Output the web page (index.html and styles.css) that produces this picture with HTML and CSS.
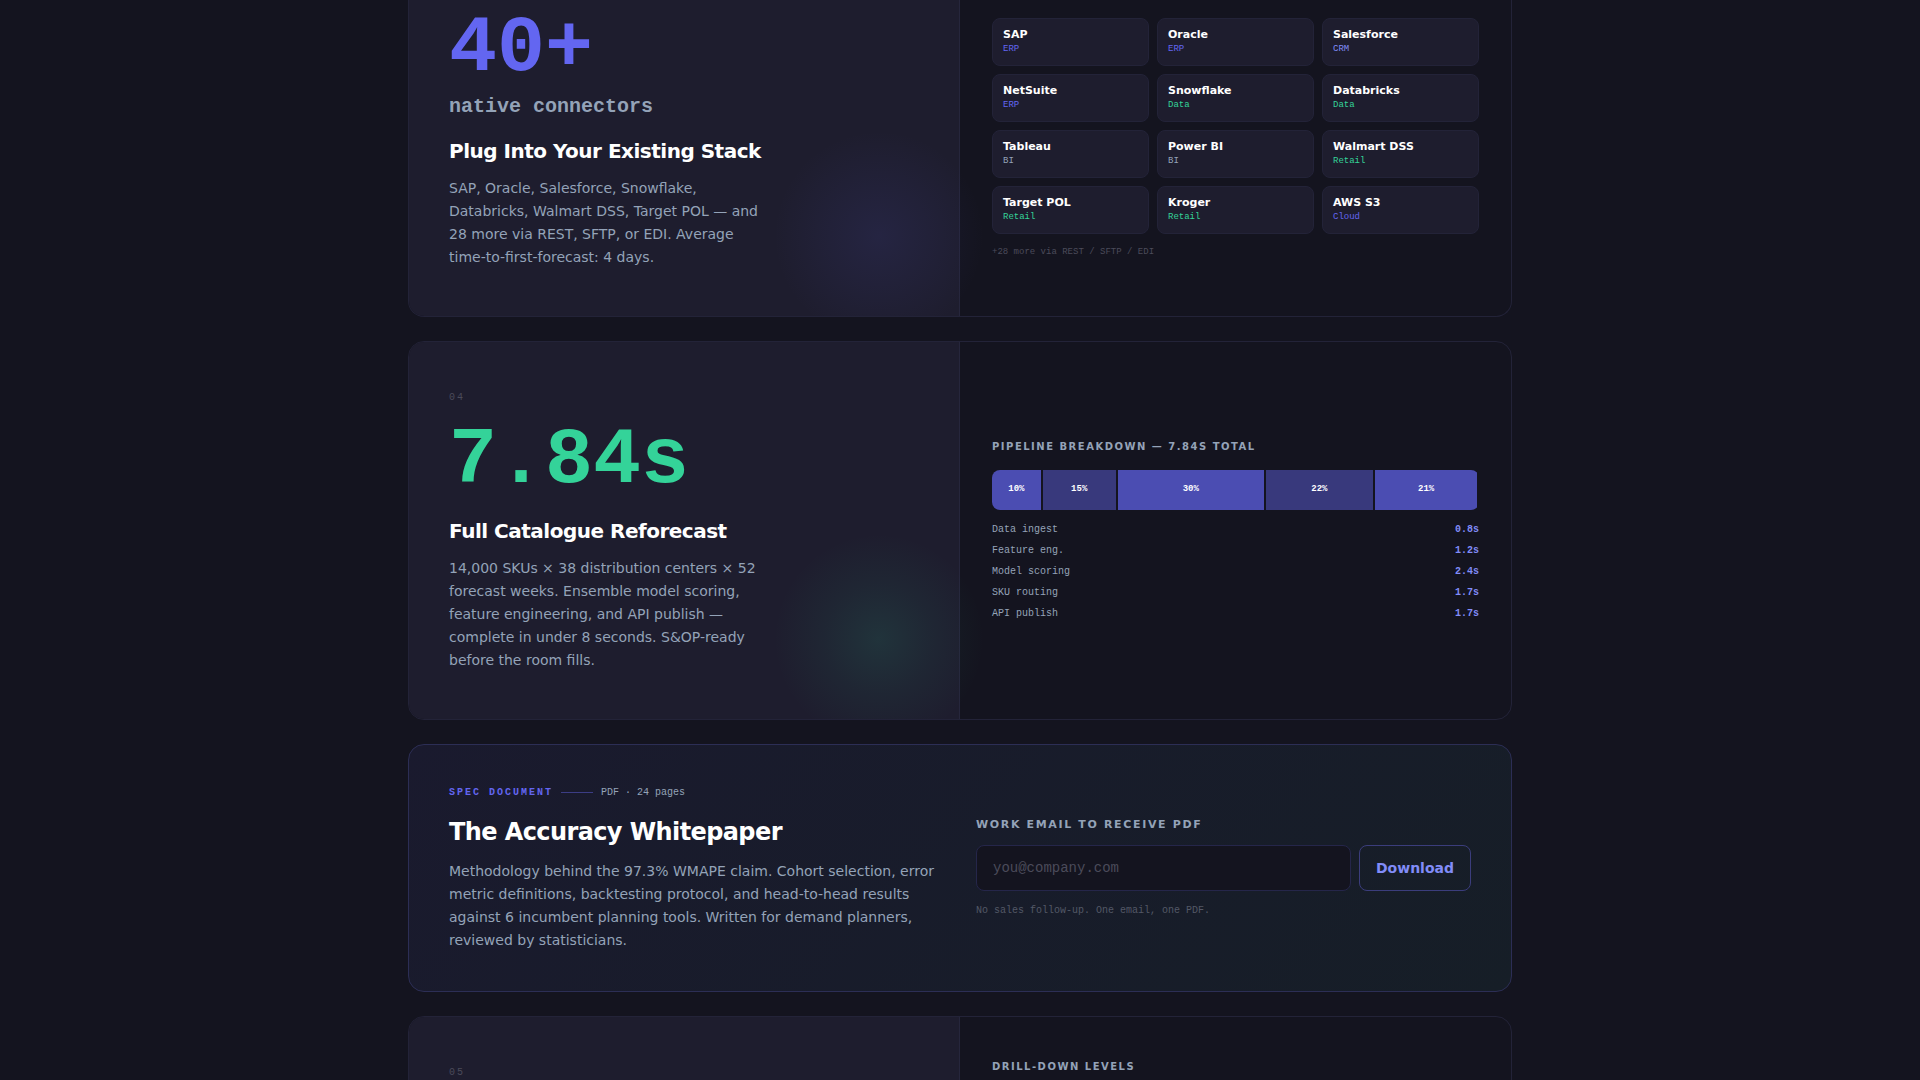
FILE: index.html
```html
<!DOCTYPE html>
<html lang="en">
<head>
    <meta charset="UTF-8">
    <meta name="viewport" content="width=device-width, initial-scale=1.0">
    <title>Features</title>
    <link rel="stylesheet" href="styles.css">
</head>
<body>

    <main class="features">

        <section class="card card-first">
            <div class="card-left glow-indigo">
                <div class="stat indigo">40+</div>
                <div class="stat-unit">native connectors</div>
                <h2 class="title">Plug Into Your Existing Stack</h2>
                <p class="text narrow">SAP, Oracle, Salesforce, Snowflake, Databricks, Walmart DSS, Target POL — and 28 more via REST, SFTP, or EDI. Average time-to-first-forecast: 4 days.</p>
            </div>
            <div class="card-right">
                <ul class="connectors">
                    <li><b>SAP</b><span class="tag indigo">ERP</span></li>
                    <li><b>Oracle</b><span class="tag indigo">ERP</span></li>
                    <li><b>Salesforce</b><span class="tag violet">CRM</span></li>
                    <li><b>NetSuite</b><span class="tag indigo">ERP</span></li>
                    <li><b>Snowflake</b><span class="tag green">Data</span></li>
                    <li><b>Databricks</b><span class="tag green">Data</span></li>
                    <li><b>Tableau</b><span class="tag gray">BI</span></li>
                    <li><b>Power BI</b><span class="tag gray">BI</span></li>
                    <li><b>Walmart DSS</b><span class="tag green">Retail</span></li>
                    <li><b>Target POL</b><span class="tag green">Retail</span></li>
                    <li><b>Kroger</b><span class="tag green">Retail</span></li>
                    <li><b>AWS S3</b><span class="tag indigo">Cloud</span></li>
                </ul>
                <p class="more">+28 more via REST / SFTP / EDI</p>
            </div>
        </section>

        <section class="card">
            <div class="card-left glow-green">
                <div class="num">04</div>
                <div class="stat green">7.84s</div>
                <h2 class="title">Full Catalogue Reforecast</h2>
                <p class="text narrow">14,000 SKUs × 38 distribution centers × 52 forecast weeks. Ensemble model scoring, feature engineering, and API publish — complete in under 8 seconds. S&amp;OP-ready before the room fills.</p>
            </div>
            <div class="card-right">
                <h3 class="label">Pipeline breakdown — 7.84s total</h3>
                <div class="bar">
                    <span style="width: 10%">10%</span>
                    <span style="width: 15%">15%</span>
                    <span style="width: 30%">30%</span>
                    <span style="width: 22%">22%</span>
                    <span style="width: 21%">21%</span>
                </div>
                <dl class="steps">
                    <div><dt>Data ingest</dt><dd>0.8s</dd></div>
                    <div><dt>Feature eng.</dt><dd>1.2s</dd></div>
                    <div><dt>Model scoring</dt><dd>2.4s</dd></div>
                    <div><dt>SKU routing</dt><dd>1.7s</dd></div>
                    <div><dt>API publish</dt><dd>1.7s</dd></div>
                </dl>
            </div>
        </section>

        <section class="paper">
            <div class="paper-info">
                <div class="eyebrow"><b>SPEC DOCUMENT</b><i></i><span>PDF · 24 pages</span></div>
                <h2 class="paper-title">The Accuracy Whitepaper</h2>
                <p class="text">Methodology behind the 97.3% WMAPE claim. Cohort selection, error metric definitions, backtesting protocol, and head-to-head results against 6 incumbent planning tools. Written for demand planners, reviewed by statisticians.</p>
            </div>
            <form class="paper-form" name="paper">
                <label class="form-label" for="email">Work email to receive PDF</label>
                <div class="form-row">
                    <input type="email" id="email" name="email" placeholder="you@company.com">
                    <button type="button">Download</button>
                </div>
                <p class="form-note">No sales follow-up. One email, one PDF.</p>
            </form>
        </section>

        <section class="card card-last">
            <div class="card-left">
                <div class="num">05</div>
            </div>
            <div class="card-right">
                <h3 class="label">Drill-down levels</h3>
            </div>
        </section>

    </main>

</body>
</html>
```
FILE: styles.css
```css
* {
    box-sizing: border-box;
    margin: 0;
    padding: 0;
}

body {
    background-color: #14141f;
    color: #fff;
    font-family: "DejaVu Sans", sans-serif;
    height: 100vh;
    overflow: hidden;
}

.features {
    max-width: 1200px;
    margin: 0 auto;
    padding: 0 48px;
    display: flex;
    flex-direction: column;
    gap: 24px;
}

/* two-panel card */
.card {
    display: grid;
    grid-template-columns: 1fr 1fr;
    flex-shrink: 0;
    border: 1px solid #232338;
    border-radius: 16px;
    overflow: hidden;
}

.card-left {
    position: relative;
    padding: 48px 40px 47px;
    background-color: #1e1d2e;
    border-right: 1px solid #26263c;
}

.card-right {
    padding: 32px 32px 34px;
    display: flex;
    flex-direction: column;
    justify-content: center;
}

.card-first {
    border-top: none;
    border-radius: 0 0 16px 16px;
}

.card-first .card-left {
    padding-top: 9px;
}

.card-first .card-right {
    padding-top: 18px;
    justify-content: flex-start;
}

.card-last {
    min-height: 378px;
}

.card-last .card-right {
    padding-top: 42px;
    justify-content: flex-start;
}

/* soft light in the corner of the left panel */
.glow-indigo::after,
.glow-green::after {
    content: "";
    position: absolute;
    right: -40px;
    bottom: -40px;
    width: 240px;
    height: 240px;
    border-radius: 50%;
    pointer-events: none;
}

.glow-indigo::after {
    background: radial-gradient(circle, rgba(99, 102, 241, 0.1), rgba(99, 102, 241, 0.05) 32%, transparent 62%);
}

.glow-green::after {
    background: radial-gradient(circle, rgba(52, 211, 153, 0.12), rgba(52, 211, 153, 0.05) 32%, transparent 62%);
}

.num {
    font: 10px/15px "Liberation Mono", monospace;
    letter-spacing: 2px;
    color: #4b4b5a;
    margin-bottom: 16px;
}

.stat {
    font: bold 80px/80px "Liberation Mono", monospace;
}

.stat-unit {
    font: bold 20px/28px "Liberation Mono", monospace;
    color: #94a3b8;
    margin-top: 4px;
}

.title {
    font-size: 20px;
    line-height: 28px;
    letter-spacing: -0.025em;
    margin: 16px 0 12px;
}

.text {
    font-size: 14px;
    line-height: 23px;
    color: #94a3b8;
}

.narrow {
    max-width: 320px;
}

.indigo { color: #6366f1; }
.violet { color: #818cf8; }
.green { color: #34d399; }
.gray { color: #94a3b8; }

.label,
.form-label {
    display: block;
    font-size: 10px;
    font-weight: bold;
    line-height: 15px;
    letter-spacing: 0.15em;
    text-transform: uppercase;
    color: #94a3b8;
}

/* connectors */
.connectors {
    display: grid;
    grid-template-columns: repeat(3, 1fr);
    gap: 8px;
    list-style: none;
}

.connectors li {
    height: 48px;
    padding: 8px 10px;
    background-color: #1e1d2e;
    border: 1px solid #232338;
    border-radius: 8px;
}

.connectors b {
    display: block;
    font-size: 11px;
    line-height: 16px;
}

.tag {
    display: block;
    font: 9px/12px "Liberation Mono", monospace;
}

.more {
    font: 9px/14px "Liberation Mono", monospace;
    color: #4b4b5a;
    margin-top: 11px;
}

/* pipeline */
.bar {
    display: flex;
    gap: 2px;
    height: 40px;
    margin: 16px 0 12px;
    border-radius: 8px;
    overflow: hidden;
}

.bar span {
    background-color: #4b4db2;
    font: bold 9px/38px "Liberation Mono", monospace;
    text-align: center;
}

.bar span:nth-child(even) {
    background-color: #38397c;
}

.steps {
    display: flex;
    flex-direction: column;
    gap: 6px;
    font: 10px/15px "Liberation Mono", monospace;
    color: #94a3b8;
}

.steps div {
    display: flex;
    justify-content: space-between;
}

.steps dd {
    font-weight: bold;
    color: #818cf8;
}

/* whitepaper */
.paper {
    display: grid;
    grid-template-columns: 1fr 1fr;
    gap: 32px;
    align-items: center;
    flex-shrink: 0;
    padding: 40px 40px 39px;
    border: 1px solid #2c2e55;
    border-radius: 16px;
    background: linear-gradient(135deg, #1a1a2e, #161e27);
}

.eyebrow {
    display: flex;
    align-items: center;
    gap: 8px;
    font: 10px/15px "Liberation Mono", monospace;
    color: #94a3b8;
}

.eyebrow b {
    color: #6366f1;
    letter-spacing: 2px;
}

.eyebrow i {
    width: 32px;
    height: 1px;
    background-color: #3c3d85;
}

.paper-title {
    font-size: 24px;
    line-height: 36px;
    letter-spacing: -0.025em;
    margin: 14px 0 10px;
}

.paper-form {
    padding-bottom: 4px;
}

.form-label {
    font-size: 11px;
    line-height: 17px;
}

.form-row {
    display: flex;
    gap: 8px;
    margin: 12px 0;
}

.form-row input {
    flex: 1;
    min-width: 0;
    height: 46px;
    padding: 0 16px;
    background-color: #14141f;
    border: 1px solid #25264a;
    border-radius: 8px;
    color: #fff;
    font: 14px "Liberation Mono", monospace;
}

.form-row input::placeholder {
    color: #4b4b5a;
}

.form-row button {
    padding: 0 16px;
    background: none;
    border: 1px solid #3b3d7c;
    border-radius: 8px;
    color: #818cf8;
    font: bold 14px "DejaVu Sans", sans-serif;
    cursor: pointer;
}

.form-note {
    font: 10px/15px "Liberation Mono", monospace;
    color: #535866;
}
```
